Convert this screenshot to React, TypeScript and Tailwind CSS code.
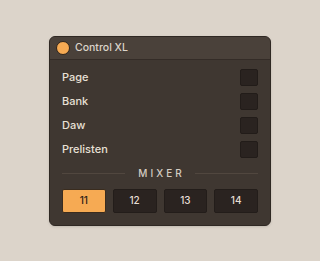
import React from 'react'

const rows = ['Page', 'Bank', 'Daw', 'Prelisten']
const channels = [11, 12, 13, 14]

export default function App() {
    return (
        <div className="min-h-screen flex items-center justify-center bg-[#dcd4ca]" style={{ fontFamily: 'Inter, "Noto Sans", sans-serif' }}>
            <div className="w-[222px] rounded-[6px] bg-[#3f3731] border border-[#2f2823] overflow-hidden shadow-sm">
                {/* Header */}
                <div className="h-[23px] flex items-center gap-[5px] px-[6px] bg-[#4a413a] border-b border-[#342c27]">
                    <div className="w-[14px] h-[14px] rounded-full bg-[#f6aa53] border border-[#2e241c]"></div>
                    <span className="text-[10.5px] font-medium text-[#dcd4ca]">Control XL</span>
                </div>

                <div className="px-3 pt-[9px] pb-3">
                    {/* Toggles */}
                    <div className="flex flex-col gap-[6px]">
                        {rows.map((label) => (
                            <div key={label} className="h-[18px] flex items-center justify-between">
                                <span className="text-[11px] font-medium text-[#e8e0d6]">{label}</span>
                                <div className="w-[18px] h-[17px] rounded-[2px] bg-[#2a2320] border border-[#221c19]"></div>
                            </div>
                        ))}
                    </div>

                    {/* Mixer */}
                    <div className="mt-[8px] h-[14px] flex items-center gap-[10px]">
                        <div className="flex-1 h-px bg-[#51473f]"></div>
                        <span className="text-[10px] font-medium tracking-[3px] text-[#d4ccc2] pl-[3px]">MIXER</span>
                        <div className="flex-1 h-px bg-[#51473f]"></div>
                    </div>

                    <div className="mt-[8px] grid grid-cols-4 gap-[7px]">
                        {channels.map((n, i) => (
                            <div
                                key={n}
                                className={
                                    i === 0
                                        ? 'h-[24px] flex items-center justify-center rounded-[2px] bg-[#f6aa53] border border-[#3a2c1e] text-[10px] font-medium text-[#2a2118]'
                                        : 'h-[24px] flex items-center justify-center rounded-[2px] bg-[#2a2320] border border-[#231d1a] text-[10px] font-medium text-[#e6ded4]'
                                }
                            >
                                {n}
                            </div>
                        ))}
                    </div>
                </div>
            </div>
        </div>
    )
}
